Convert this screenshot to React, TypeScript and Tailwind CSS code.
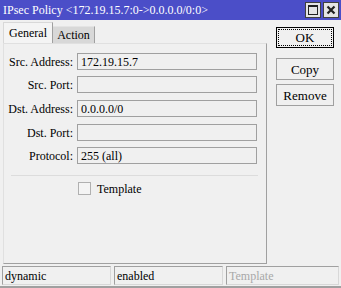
const rows = [
  { label: 'Src. Address:', value: '172.19.15.7', gap: 'mt-[9px]' },
  { label: 'Src. Port:', value: '', gap: 'mt-[6px]' },
  { label: 'Dst. Address:', value: '0.0.0.0/0', gap: 'mt-[7px]' },
  { label: 'Dst. Port:', value: '', gap: 'mt-[7px]' },
  { label: 'Protocol:', value: '255 (all)', gap: 'mt-[6px]' },
];

function TitleButton({ children }: { children: React.ReactNode }) {
  return (
    <div className="flex h-[16px] w-[16px] items-center justify-center border border-[#404040] bg-[#e4e4e4]">
      {children}
    </div>
  );
}

export default function App() {
  return (
    <div className="flex h-[288px] w-[341px] flex-col bg-[#f0f0f0] [font-family:'Liberation_Serif',serif] text-[12px] leading-none text-black">
      <div className="flex h-[20px] items-center justify-between bg-[#4b4ec8] pl-[3px] pr-[2px] text-white">
        <span className="text-[12px]">IPsec Policy &lt;172.19.15.7:0-&gt;0.0.0.0/0:0&gt;</span>
        <div className="flex gap-[2px]">
          <TitleButton>
            <div className="h-[10px] w-[10px] border border-t-2 border-[#202020]" />
          </TitleButton>
          <TitleButton>
            <svg width="10" height="10" viewBox="0 0 10 10">
              <path d="M1.5 1.5 L8.5 8.5 M8.5 1.5 L1.5 8.5" stroke="#202020" strokeWidth="2.2" />
            </svg>
          </TitleButton>
        </div>
      </div>

      <div className="flex flex-1">
        <div className="ml-[3px] mt-[3px] flex w-[264px] flex-col">
          <div className="flex h-[20px] items-end">
            <div className="flex h-[21px] w-[50px] items-center justify-center border-l border-r border-t border-[#d8d8d8] border-r-[#a0a0a0] bg-[#f4f4f4] pb-[1px]">
              General
            </div>
            <div className="flex h-[17px] w-[42px] items-center justify-center border-r border-t border-[#a0a0a0] border-t-[#e4e4e4] bg-[#d8d8d8]">
              Action
            </div>
          </div>
          <div className="flex h-[221px] flex-col border border-[#a0a0a0] border-l-[#e0e0e0] border-t-[#e0e0e0]">
            {rows.map((r) => (
              <div key={r.label} className={`${r.gap} flex h-[17px] items-center`}>
                <div className="w-[69px] text-right">{r.label}</div>
                <div className="ml-[4px] flex h-[17px] w-[180px] items-center border border-[#a0a0a0] pl-[3px]">
                  {r.value}
                </div>
              </div>
            ))}
            <div className="ml-[7px] mr-[8px] mt-[11px] h-px bg-[#dcdcdc]" />
            <div className="ml-[74px] mt-[6px] flex items-center">
              <div className="h-[13px] w-[13px] border border-[#b0b0b0] bg-[#f4f4f4]" />
              <span className="ml-[6px]">Template</span>
            </div>
          </div>
        </div>

        <div className="ml-[9px] mt-[7px] flex w-[58px] flex-col">
          <div className="flex h-[21px] items-center justify-center border border-black p-[1px]">
            <div className="flex h-full w-full items-center justify-center border border-dotted border-black text-[13px]">
              OK
            </div>
          </div>
          <div className="mt-[10px] flex h-[22px] items-center justify-center border border-[#a0a0a0] text-[13px]">
            Copy
          </div>
          <div className="mt-[4px] flex h-[22px] items-center justify-center border border-[#a0a0a0] text-[13px]">
            Remove
          </div>
        </div>
      </div>

      <div className="mb-[1px] flex h-[19px] gap-[3px] px-[2px]">
        <div className="flex w-[109px] items-center border border-[#a0a0a0] border-b-[#d8d8d8] border-r-[#d8d8d8] pl-[2px]">dynamic</div>
        <div className="flex w-[109px] items-center border border-[#a0a0a0] border-b-[#d8d8d8] border-r-[#d8d8d8] pl-[2px]">enabled</div>
        <div className="flex w-[113px] items-center border border-[#a0a0a0] border-b-[#d8d8d8] border-r-[#d8d8d8] pl-[2px] text-[#a8a8a8]">Template</div>
      </div>
      <div className="h-[2px] bg-[#a0a0a0]" />
    </div>
  );
}
